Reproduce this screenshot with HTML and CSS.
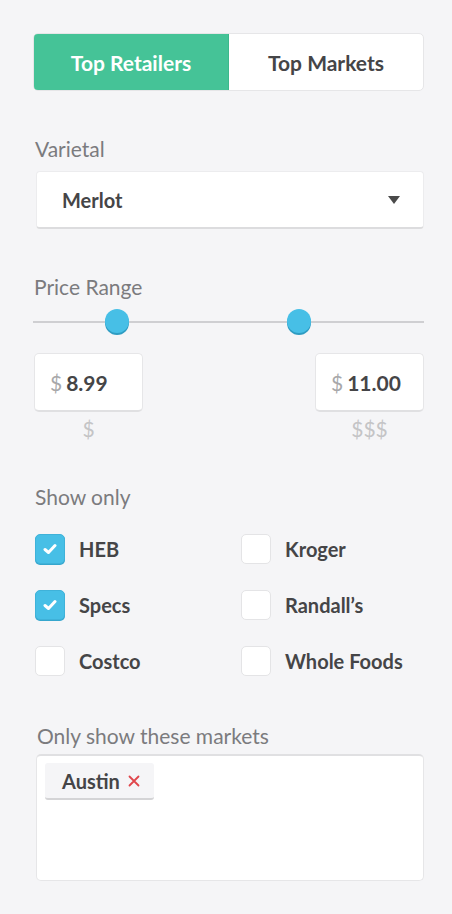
FILE: index.html
```html
<!DOCTYPE html>
<html>
<head>
<meta charset="utf-8">
<link rel="stylesheet" href="styles.css">
</head>
<body>
<div class="panel">
  <div class="segmented">
    <div class="seg seg-active">Top Retailers</div>
    <div class="seg">Top Markets</div>
  </div>

  <div class="label label-varietal">Varietal</div>
  <div class="select">
    <span class="select-value">Merlot</span>
    <svg class="caret" width="14" height="10" viewBox="0 0 14 10"><path d="M1 1 H13 L7 9 Z" fill="#4a4a4a"/></svg>
  </div>

  <div class="label label-price">Price Range</div>
  <div class="slider">
    <div class="track"></div>
    <div class="thumb thumb-a"></div>
    <div class="thumb thumb-b"></div>
  </div>
  <div class="price-row">
    <div class="price-col">
      <div class="price-box"><span class="cur">$</span><span class="amt">8.99</span></div>
      <div class="price-hint">$</div>
    </div>
    <div class="price-col">
      <div class="price-box"><span class="cur">$</span><span class="amt">11.00</span></div>
      <div class="price-hint">$$$</div>
    </div>
  </div>

  <div class="label label-show">Show only</div>
  <div class="checks">
    <div class="check"><span class="box box-on"><svg width="14" height="12" viewBox="0 0 14 12"><path d="M2 6.5 L5.5 9.5 L12 2.5" fill="none" stroke="#fff" stroke-width="3" stroke-linecap="round" stroke-linejoin="round"/></svg></span>HEB</div>
    <div class="check"><span class="box"></span>Kroger</div>
    <div class="check"><span class="box box-on"><svg width="14" height="12" viewBox="0 0 14 12"><path d="M2 6.5 L5.5 9.5 L12 2.5" fill="none" stroke="#fff" stroke-width="3" stroke-linecap="round" stroke-linejoin="round"/></svg></span>Specs</div>
    <div class="check"><span class="box"></span>Randall’s</div>
    <div class="check"><span class="box"></span>Costco</div>
    <div class="check"><span class="box"></span>Whole Foods</div>
  </div>

  <div class="label label-markets">Only show these markets</div>
  <div class="tagbox">
    <span class="tag">Austin<svg class="tag-x" width="12" height="12" viewBox="0 0 12 12"><path d="M1.5 1.5 L10.5 10.5 M10.5 1.5 L1.5 10.5" stroke="#e0464b" stroke-width="1.8" stroke-linecap="round"/></svg></span>
  </div>
</div>
</body>
</html>
```

FILE: styles.css
```css
* { box-sizing: border-box; }
html, body {
  margin: 0;
  padding: 0;
  background: #f5f5f7;
}
body {
  font-family: Lato, "Open Sans", sans-serif;
  color: #444;
}
.panel {
  width: 452px;
  padding: 33px 28px 0 33px;
}
.segmented {
  display: flex;
  height: 58px;
  border: 1px solid #e6e6e8;
  border-radius: 5px;
  background: #fff;
  overflow: hidden;
}
.seg {
  flex: 1;
  display: flex;
  align-items: center;
  justify-content: center;
  font-size: 21px;
  font-weight: 700;
  color: #454547;
}
.seg-active {
  background: #45c397;
  color: #fff;
  flex: 0 0 196px;
  border: 1px solid #3db88c;
  border-radius: 4px 0 0 4px;
  margin: -1px 0 -1px -1px;
}
.label {
  font-size: 21px;
  color: #7b7b7e;
  line-height: 24px;
}
.label-varietal { margin: 46px 0 0 2px; }
.select {
  margin: 10px 0 0 3px;
  height: 58px;
  background: #fff;
  border: 1px solid #ececee;
  border-bottom: 2px solid #dcdcde;
  border-radius: 4px;
  display: flex;
  align-items: center;
  justify-content: space-between;
  padding: 0 22px 0 25px;
}
.select-value {
  font-size: 20px;
  font-weight: 700;
  color: #454547;
}
.label-price { margin: 46px 0 0 1px; }
.slider {
  position: relative;
  height: 26px;
  margin-top: 10px;
}
.track {
  position: absolute;
  left: 0;
  right: 0;
  top: 12px;
  height: 2px;
  background: #cfcfd2;
}
.thumb {
  position: absolute;
  top: 0;
  width: 24px;
  height: 24px;
  border-radius: 50%;
  background: #47bfe6;
  box-shadow: 0 2px 0 #2e9cc2;
}
.thumb-a { left: 72px; }
.thumb-b { left: 254px; }
.price-row {
  display: flex;
  justify-content: space-between;
  margin-top: 18px;
  padding-left: 1px;
}
.price-col {
  display: flex;
  flex-direction: column;
  align-items: center;
}
.price-box {
  width: 109px;
  height: 59px;
  background: #fff;
  border: 1px solid #e6e6e8;
  border-bottom: 2px solid #e0e0e2;
  border-radius: 5px;
  display: flex;
  align-items: center;
  padding-left: 15px;
  font-size: 21px;
}
.cur {
  color: #a8a8aa;
  margin-right: 4px;
}
.amt {
  font-weight: 700;
  color: #454547;
}
.price-hint {
  margin-top: 5px;
  font-size: 21px;
  color: #c4c4c6;
  line-height: 24px;
}
.label-show { margin: 44px 0 0 2px; }
.checks {
  margin: 25px 0 0 2px;
  display: grid;
  grid-template-columns: 206px 1fr;
  row-gap: 26px;
}
.check {
  display: flex;
  align-items: center;
  height: 30px;
  font-size: 20px;
  font-weight: 700;
  color: #454547;
}
.box {
  width: 30px;
  height: 30px;
  border-radius: 5px;
  background: #fff;
  border: 1px solid #e4e4e6;
  margin-right: 14px;
  display: flex;
  align-items: center;
  justify-content: center;
}
.box-on {
  background: #47bfe6;
  border-color: #3fb2d9;
  box-shadow: 0 1px 0 #35a6cd;
}
.label-markets { margin: 48px 0 0 4px; }
.tagbox {
  margin: 6px 0 0 3px;
  height: 127px;
  background: #fff;
  border: 1px solid #e6e6e8;
  border-top: 2px solid #e0e0e2;
  border-radius: 5px;
  padding: 7px 8px;
}
.tag {
  display: inline-flex;
  align-items: center;
  height: 37px;
  padding: 0 14px 0 17px;
  background: #f5f5f7;
  border-bottom: 2px solid #d4d4d6;
  border-radius: 3px;
  font-size: 20px;
  font-weight: 700;
  color: #454547;
}
.tag-x {
  margin-left: 8px;
}
```
